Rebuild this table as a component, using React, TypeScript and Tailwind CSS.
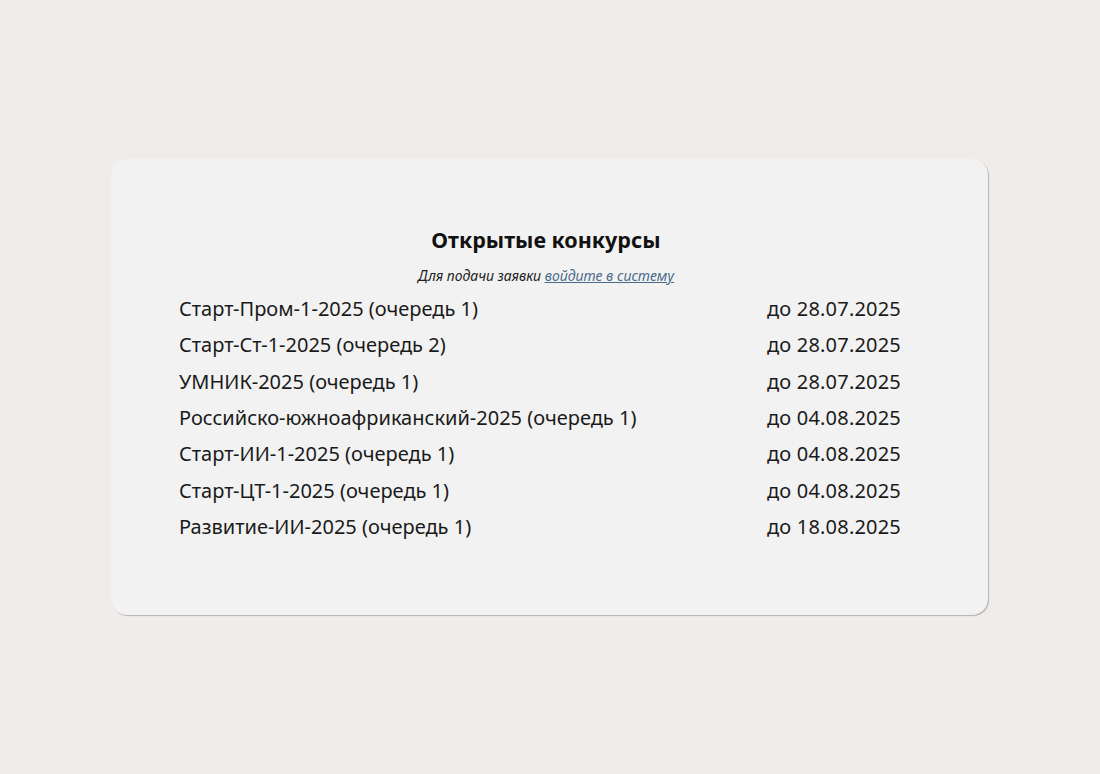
import React from "react";

const rows: [string, string][] = [
  ["Старт-Пром-1-2025 (очередь 1)", "до 28.07.2025"],
  ["Старт-Ст-1-2025 (очередь 2)", "до 28.07.2025"],
  ["УМНИК-2025 (очередь 1)", "до 28.07.2025"],
  ["Российско-южноафриканский-2025 (очередь 1)", "до 04.08.2025"],
  ["Старт-ИИ-1-2025 (очередь 1)", "до 04.08.2025"],
  ["Старт-ЦТ-1-2025 (очередь 1)", "до 04.08.2025"],
  ["Развитие-ИИ-2025 (очередь 1)", "до 18.08.2025"],
];

export default function App() {
  return (
    <div
      className="w-[1100px] h-[774px] bg-[#efecea] pt-[159px] pl-[111px]"
      style={{ fontFamily: '"Noto Sans", "Open Sans", sans-serif' }}
    >
      <div className="w-[877px] h-[456px] rounded-[16px] bg-[#f2f2f2] shadow-[1px_1px_1px_rgba(0,0,0,0.25)] pt-[66px] pl-[68px] pr-[87px]">
        <h2 className="text-center text-[21.5px] leading-[30px] font-bold text-[#111] pl-[12px]">
          Открытые конкурсы
        </h2>
        <p className="text-center text-[14px] leading-[20px] italic text-[#222] mt-[11px] pl-[12px]">
          Для подачи заявки{" "}
          <a href="#" className="underline text-[#4a6a8c]">
            войдите в систему
          </a>
        </p>
        <div className="mt-[5px] flex flex-col">
          {rows.map(([name, date]) => (
            <div key={name} className="flex justify-between h-[36.3px] items-center text-[20px] text-[#1a1a1a]">
              <span>{name}</span>
              <span className="tracking-[0.2px]">{date}</span>
            </div>
          ))}
        </div>
      </div>
    </div>
  );
}
